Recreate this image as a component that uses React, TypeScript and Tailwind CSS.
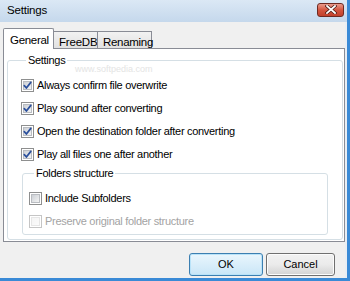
import React from 'react'

const font = { fontFamily: '"Liberation Sans", Arial, sans-serif' }

function CheckBox({ checked, disabled }: { checked?: boolean; disabled?: boolean }) {
  const edge = disabled ? '#c5c5c5' : '#8e8f8f'
  const a = disabled ? '#f4f4f4' : '#c9cdd3'
  const b = disabled ? '#fbfbfb' : '#f6f6f6'
  const id = disabled ? 'cbd' : 'cbn'
  return (
    <svg width="13" height="13" viewBox="0 0 13 13" className="shrink-0">
      <defs>
        <linearGradient id={id} x1="0" y1="0" x2="1" y2="1">
          <stop offset="0" stopColor={a} />
          <stop offset="1" stopColor={b} />
        </linearGradient>
      </defs>
      <rect x="0.5" y="0.5" width="12" height="12" fill="#fff" stroke={edge} />
      <rect x="2.5" y="2.5" width="8" height="8" fill={`url(#${id})`} stroke={disabled ? '#e6e6e6' : '#b9bcc1'} />
      {checked && (
        <path d="M3.3 6.6 L5.4 9 L9.8 3.4" fill="none" stroke="#2a4f9c" strokeWidth="1.7" strokeLinecap="round" strokeLinejoin="round" />
      )}
    </svg>
  )
}

function Row({ label, checked, disabled }: { label: string; checked?: boolean; disabled?: boolean }) {
  return (
    <div className="h-[23px] flex items-center gap-[3px]">
      <CheckBox checked={checked} disabled={disabled} />
      <span className={`text-[11px] tracking-[-0.3px] leading-[13px] ${disabled ? 'text-[#a3a3a3]' : 'text-black'}`}>
        {label}
      </span>
    </div>
  )
}

export default function App() {
  return (
    <div
      className="relative w-[350px] h-[281px] overflow-hidden flex flex-col border-r-[3px] border-b-[3px] border-[#3a8ad6] bg-[#e9eef4]"
      style={font}
    >
      {/* Title bar */}
      <div className="h-[22px] shrink-0 flex items-center justify-between pl-[7px] pr-[3px] bg-gradient-to-b from-[#dbe8f5] to-[#c5d8ec]">
        <span className="text-[11.5px] tracking-[-0.2px] text-black">Settings</span>
        <div className="w-[27px] h-[14px] -mt-[3px] rounded-[3px] border border-[#6e2a22] bg-gradient-to-b from-[#e99a8c] via-[#d4553f] to-[#c1402c] flex items-center justify-center">
          <svg width="12" height="9" viewBox="0 0 12 9">
            <path d="M2 1 L10 8 M10 1 L2 8" stroke="#4b1a14" strokeWidth="3.2" strokeLinecap="square" />
            <path d="M2 1 L10 8 M10 1 L2 8" stroke="#fff" strokeWidth="1.8" strokeLinecap="square" />
          </svg>
        </div>
      </div>

      {/* Client area */}
      <div className="flex-1 min-h-0 flex flex-col bg-[#f0f0f0] mr-[2px] pl-[3px] pt-[6px]">
        {/* Tabs */}
        <div className="flex items-end h-[21px] shrink-0 relative z-10 -mb-px">
          <div className="h-[21px] w-[51px] bg-white border border-b-0 border-[#898c95] rounded-t-[2px] flex items-start pt-[3px] pl-[6px] text-[11.5px] tracking-[-0.3px] text-black">
            General
          </div>
          <div className="h-[18px] w-[45px] -ml-px bg-gradient-to-b from-[#f2f2f2] to-[#e1e1e1] border border-[#898c95] flex items-start pt-[2px] pl-[5px] text-[11.5px] tracking-[-0.2px] text-black">
            FreeDB
          </div>
          <div className="h-[18px] w-[55px] -ml-px bg-gradient-to-b from-[#f2f2f2] to-[#e1e1e1] border border-[#898c95] flex items-start pt-[2px] pl-[5px] text-[11.5px] tracking-[-0.3px] text-black">
            Renaming
          </div>
        </div>

        {/* Panel */}
        <div className="w-[342px] h-[194px] shrink-0 bg-white border border-[#898c95] pl-[3px] pr-px pt-[5px]">
          <fieldset className="h-[186px] border border-[#d5dfe5] rounded-[3px] pl-[13px]">
            <legend className="ml-[5px] px-[2px] text-[11px] tracking-[-0.3px] leading-[13px] text-black">Settings</legend>
            <div className="pt-[7px]">
              <Row label="Always confirm file overwrite" checked />
              <Row label="Play sound after converting" checked />
              <Row label="Open the destination folder after converting" checked />
              <Row label="Play all files one after another" checked />
            </div>
            <fieldset className="mt-[1px] ml-[1px] w-[306px] h-[68px] border border-[#d5dfe5] rounded-[3px] pl-[6px]">
              <legend className="ml-[5px] px-[2px] text-[11px] tracking-[-0.3px] leading-[13px] text-black">Folders structure</legend>
              <div className="pt-[7px]">
                <Row label="Include Subfolders" />
                <Row label="Preserve original folder structure" disabled />
              </div>
            </fieldset>
          </fieldset>
        </div>

        {/* Buttons */}
        <div className="flex justify-end gap-[3px] pr-[10px] pt-[11px]">
          <button className="w-[74px] h-[23px] rounded-[3px] border border-[#3c7fb1] bg-gradient-to-b from-[#eaf6fd] to-[#c9e6f7] shadow-[inset_0_0_0_1px_#b9e3f9] text-[11px] text-black">
            OK
          </button>
          <button className="w-[69px] h-[23px] rounded-[3px] border border-[#707070] bg-gradient-to-b from-[#f2f2f2] via-[#ebebeb] to-[#d3d3d3] shadow-[inset_0_0_0_1px_#fcfcfc] text-[11px] text-black">
            Cancel
          </button>
        </div>
      </div>

      {/* watermark */}
      <span className="absolute left-[75px] top-[63px] text-[9px] text-[#e4e4e4] pointer-events-none">www.softpedia.com</span>
    </div>
  )
}
